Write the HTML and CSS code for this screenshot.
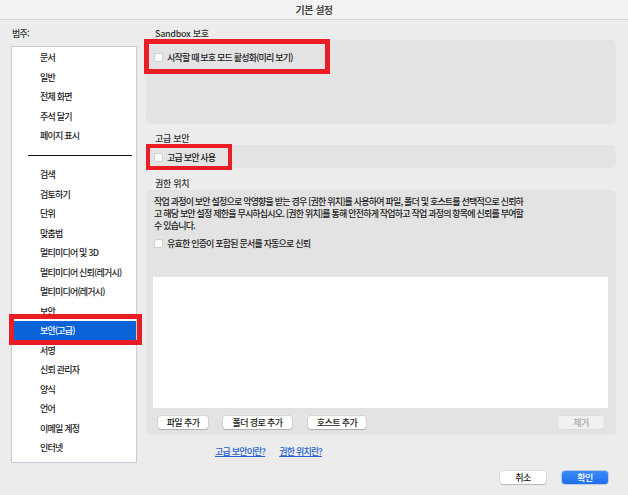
FILE: index.html
```html
<!DOCTYPE html>
<html lang="ko">
<head>
    <meta charset="UTF-8">
    <meta name="viewport" content="width=device-width, initial-scale=1.0">
    <title>기본 설정</title>
    <link rel="stylesheet" href="styles.css">
</head>
<body>
    <div class="titlebar">기본 설정</div>

    <div class="content">
        <div class="sidebar">
            <div class="sidebar-label">범주:</div>
            <ul class="category-list">
                <li>문서</li>
                <li>일반</li>
                <li>전체 화면</li>
                <li>주석 달기</li>
                <li>페이지 표시</li>
                <li class="divider"></li>
                <li>검색</li>
                <li>검토하기</li>
                <li>단위</li>
                <li>맞춤법</li>
                <li>멀티미디어 및 3D</li>
                <li>멀티미디어 신뢰(레거시)</li>
                <li>멀티미디어(레거시)</li>
                <li>보안</li>
                <li class="selected">보안(고급)</li>
                <li>서명</li>
                <li>신뢰 관리자</li>
                <li>양식</li>
                <li>언어</li>
                <li>이메일 계정</li>
                <li>인터넷</li>
            </ul>
        </div>

        <div class="settings">
            <div class="group-label">Sandbox 보호</div>
            <div class="panel panel-sandbox">
                <label class="check"><input type="checkbox">시작할 때 보호 모드 활성화(미리 보기)</label>
            </div>

            <div class="group-label gap-9">고급 보안</div>
            <div class="panel panel-enhanced">
                <label class="check"><input type="checkbox">고급 보안 사용</label>
            </div>

            <div class="group-label gap-10">권한 위치</div>
            <div class="panel panel-locations">
                <p class="desc">작업 과정이 보안 설정으로 악영향을 받는 경우 [권한 위치]를 사용하여 파일, 폴더 및 호스트를 선택적으로 신뢰하<br>고 해당 보안 설정 제한을 무시하십시오. [권한 위치]를 통해 안전하게 작업하고 작업 과정의 항목에 신뢰를 부여할<br>수 있습니다.</p>
                <label class="check check-cert"><input type="checkbox">유효한 인증이 포함된 문서를 자동으로 신뢰</label>
                <div class="trust-list"></div>
                <div class="list-buttons">
                    <button class="btn btn-file">파일 추가</button>
                    <button class="btn btn-folder">폴더 경로 추가</button>
                    <button class="btn btn-host">호스트 추가</button>
                    <button class="btn btn-remove" disabled>제거</button>
                </div>
            </div>

            <div class="help-links">
                <a href="#">고급 보안이란?</a>
                <a href="#">권한 위치란?</a>
            </div>

            <div class="dialog-buttons">
                <button class="btn btn-dialog">취소</button>
                <button class="btn btn-dialog btn-primary">확인</button>
            </div>
        </div>
    </div>

    <!-- red markers drawn over the screenshot -->
    <div class="marker marker-sandbox"></div>
    <div class="marker marker-enhanced"></div>
    <div class="marker marker-category"></div>
</body>
</html>
```

FILE: styles.css
```css
body {
    margin: 0;
    width: 628px;
    height: 495px;
    overflow: hidden;
    position: relative;
    background-color: #ececec;
    font-family: "Noto Sans CJK KR", "Noto Sans", sans-serif;
    font-size: 9px;
    font-weight: 500;
    letter-spacing: -0.8px;
    color: #1a1a1a;
}
.titlebar {
    height: 19px;
    line-height: 19px;
    text-align: center;
    background-color: #f3f3f3;
    border-bottom: 1px solid #d5d5d5;
    font-size: 10px;
    font-weight: bold;
    letter-spacing: -0.5px;
    color: #4a4a4a;
}
.content {
    display: flex;
    padding: 8px 0 0 11px;
}
.sidebar {
    width: 126px;
}
.sidebar-label {
    height: 12px;
    line-height: 12px;
    padding-left: 1px;
    margin-bottom: 6px;
    color: #333;
}
.category-list {
    list-style: none;
    margin: 0;
    padding: 1px 0 0;
    height: 417px;
    box-sizing: border-box;
    background-color: #fff;
    border: 1px solid #c6ccd7;
}
.category-list li {
    height: 19.5px;
    line-height: 19.5px;
    padding-left: 28px;
    white-space: nowrap;
}
.category-list li.selected {
    margin-left: 2px;
    padding-left: 26px;
    background-color: #0b63d8;
    color: #fff;
}
.category-list li.divider {
    display: flex;
    align-items: center;
    padding-left: 16px;
}
.category-list li.divider::before {
    content: "";
    width: 104px;
    height: 1px;
    background-color: #111;
}
.settings {
    width: 470px;
    margin-left: 9px;
}
.group-label {
    height: 12px;
    line-height: 12px;
    padding-left: 9px;
    letter-spacing: -0.3px;
    color: #333;
}
.gap-9 {
    margin-top: 9px;
}
.gap-10 {
    margin-top: 10px;
}
.panel {
    background-color: #e3e3e3;
    border-radius: 5px;
    box-sizing: border-box;
}
.panel-sandbox {
    height: 84px;
    padding: 11px 8px 0;
}
.panel-enhanced {
    height: 23px;
    padding: 6px 8px 0;
}
.panel-locations {
    height: 245px;
    padding: 6px 8px 6px 7px;
}
.check {
    display: flex;
    align-items: center;
    height: 12px;
    white-space: nowrap;
}
.check input {
    appearance: none;
    width: 9px;
    height: 9px;
    margin: 0 4px 0 0;
    background-color: #fff;
    border: 1px solid #cfcfcf;
    border-radius: 2px;
    box-sizing: border-box;
}
.desc {
    margin: 0;
    padding-left: 1px;
    line-height: 12px;
    white-space: nowrap;
}
.check-cert {
    margin-top: 5px;
    padding-left: 1px;
}
.trust-list {
    height: 131px;
    margin-top: 28px;
    background-color: #fff;
}
.list-buttons {
    display: flex;
    margin-top: 8px;
    padding: 0 4px 0 5px;
}
.btn {
    height: 13px;
    padding: 0;
    border: none;
    border-radius: 3px;
    background-color: #fff;
    box-shadow: 0 0 0 0.5px rgba(0, 0, 0, 0.12), 0 1px 1px rgba(0, 0, 0, 0.18);
    font-family: inherit;
    font-size: 9px;
    font-weight: 500;
    letter-spacing: -0.6px;
    color: #222;
    line-height: 13px;
}
.btn-file {
    width: 50px;
}
.btn-folder {
    width: 69px;
    margin-left: 15px;
}
.btn-host {
    width: 58px;
    margin-left: 16px;
}
.btn-remove {
    width: 46px;
    margin-left: auto;
    background-color: #f0f0f0;
    box-shadow: 0 0 0 0.5px rgba(0, 0, 0, 0.06);
    color: #a8a8a8;
}
.help-links {
    display: flex;
    gap: 14px;
    height: 12px;
    line-height: 12px;
    margin-top: 11px;
    padding-left: 69px;
}
.help-links a {
    color: #2462cf;
    text-decoration: underline;
}
.dialog-buttons {
    display: flex;
    justify-content: flex-end;
    gap: 16px;
    margin-top: 13px;
    padding-right: 8px;
}
.btn-dialog {
    width: 46px;
}
.btn-primary {
    background: linear-gradient(#3a8cf8, #1e6fea);
    color: #fff;
    box-shadow: 0 0 0 0.5px rgba(0, 60, 180, 0.4);
}
.marker {
    position: absolute;
    box-sizing: border-box;
    border: 5px solid #ea1c24;
}
.marker-sandbox {
    left: 144px;
    top: 39px;
    width: 186px;
    height: 35px;
}
.marker-enhanced {
    left: 146px;
    top: 144px;
    width: 86px;
    height: 26px;
    border-width: 4px;
}
.marker-category {
    left: 9px;
    top: 314px;
    width: 133px;
    height: 31px;
}
```
